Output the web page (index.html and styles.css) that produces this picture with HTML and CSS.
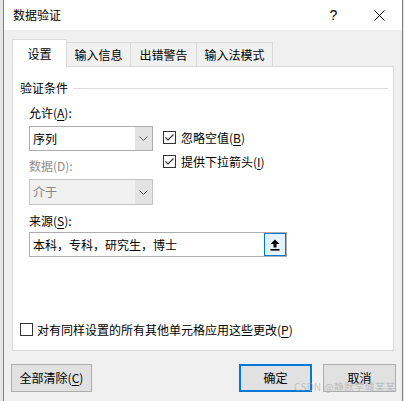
FILE: index.html
```html
<!DOCTYPE html>
<html lang="zh-CN">
<head>
<meta charset="utf-8">
<title>数据验证</title>
<link rel="stylesheet" href="styles.css">
</head>
<body>
<div class="dialog">
  <div class="titlebar">
    <span class="title">数据验证</span>
    <div class="tb-btns">
      <span class="tb-btn help">?</span>
      <span class="tb-btn close">
        <svg width="11" height="11" viewBox="0 0 11 11"><path d="M0.5 0.5 L10.5 10.5 M10.5 0.5 L0.5 10.5" stroke="#000" stroke-width="1" fill="none"/></svg>
      </span>
    </div>
  </div>
  <div class="content">
    <div class="tabs">
      <div class="tab active t1">设置</div>
      <div class="tab t2">输入信息</div>
      <div class="tab t3">出错警告</div>
      <div class="tab t4">输入法模式</div>
    </div>
    <div class="panel">
      <div class="group-title"><span>验证条件</span><span class="rule"></span></div>
      <div class="form">
        <div class="col-left">
          <div class="label">允许(<u>A</u>):</div>
          <div class="select s1">
            <span class="val">序列</span>
            <span class="drop"><svg width="9" height="5" viewBox="0 0 9 5"><polyline points="0.5,0.5 4.5,4.5 8.5,0.5" fill="none" stroke="#5a5a5a" stroke-width="1"/></svg></span>
          </div>
          <div class="label disabled l2">数据(D):</div>
          <div class="select s2 disabled">
            <span class="val">介于</span>
            <span class="drop"><svg width="9" height="5" viewBox="0 0 9 5"><polyline points="0.5,0.5 4.5,4.5 8.5,0.5" fill="none" stroke="#5a5a5a" stroke-width="1"/></svg></span>
          </div>
        </div>
        <div class="col-right">
          <div class="check">
            <span class="box"><svg width="11" height="11" viewBox="0 0 11 11"><polyline points="1.5,5.5 4,8 9.5,2.5" fill="none" stroke="#333" stroke-width="1.1"/></svg></span>
            <span>忽略空值(<u>B</u>)</span>
          </div>
          <div class="check c2">
            <span class="box"><svg width="11" height="11" viewBox="0 0 11 11"><polyline points="1.5,5.5 4,8 9.5,2.5" fill="none" stroke="#333" stroke-width="1.1"/></svg></span>
            <span>提供下拉箭头(<u>I</u>)</span>
          </div>
        </div>
      </div>
      <div class="source">
        <div class="label">来源(<u>S</u>):</div>
        <div class="input">
          <span class="val">本科，专科，研究生，博士</span>
          <span class="pick"><svg width="10" height="12" viewBox="0 0 10 12"><path d="M5 0.5 L9.5 5 L6.5 5 L6.5 8.5 L3.5 8.5 L3.5 5 L0.5 5 Z" fill="#000"/><rect x="0.5" y="10" width="9" height="1.6" fill="#000"/></svg></span>
        </div>
      </div>
      <div class="check apply">
        <span class="box"></span>
        <span>对有同样设置的所有其他单元格应用这些更改(<u>P</u>)</span>
      </div>
    </div>
    <div class="buttons">
      <button class="btn clear">全部清除(<u>C</u>)</button>
      <span class="spacer"></span>
      <button class="btn ok">确定</button>
      <button class="btn cancel">取消</button>
    </div>
  </div>
  <div class="watermark">CSDN @静默学城某某</div>
</div>
</body>
</html>
```
FILE: styles.css
```css
html, body {
  margin: 0;
  padding: 0;
}
body {
  width: 404px;
  height: 401px;
  overflow: hidden;
  background: #e6e6e6;
  font-family: "Noto Sans CJK SC", "Noto Sans", sans-serif;
  font-size: 12px;
  line-height: 16px;
  color: #000;
}
u {
  text-decoration: underline;
  text-underline-offset: 2px;
}
.dialog {
  position: relative;
  margin-left: 3px;
  width: 400px;
  height: 401px;
  box-sizing: border-box;
  border-left: 1px solid #7f7f7f;
  border-right: 1px solid #7f7f7f;
  background: #f0f0f0;
  display: flex;
  flex-direction: column;
}
.titlebar {
  height: 30px;
  background: #fff;
  display: flex;
  align-items: center;
  padding-left: 9px;
}
.title {
  flex: 1;
}
.tb-btns {
  display: flex;
  height: 30px;
}
.tb-btn {
  width: 45px;
  height: 30px;
  display: flex;
  align-items: center;
  justify-content: center;
}
.help {
  font-family: "Liberation Sans", sans-serif;
  font-size: 14px;
}
.close {
  padding-left: 1px;
}
.content {
  flex: 1;
  padding: 9px 7px 0 8px;
  display: flex;
  flex-direction: column;
}
.tabs {
  height: 27px;
  display: flex;
  align-items: flex-end;
}
.tab {
  box-sizing: border-box;
  height: 24px;
  border: 1px solid #d9d9d9;
  border-bottom: none;
  display: flex;
  align-items: center;
  justify-content: center;
  padding-top: 1px;
  margin-left: -1px;
  background: #f0f0f0;
}
.tab.t1 { width: 55px; margin-left: 0; }
.tab.t2 { width: 65px; }
.tab.t3 { width: 67px; }
.tab.t4 { width: 77px; }
.tab.active {
  height: 28px;
  margin-bottom: -1px;
  background: #fff;
  position: relative;
  z-index: 1;
  padding-top: 0;
}
.panel {
  box-sizing: border-box;
  width: 382px;
  height: 285px;
  border: 1px solid #d9d9d9;
  background: #fff;
  padding: 13px 0 14px 0;
  display: flex;
  flex-direction: column;
}
.group-title {
  height: 16px;
  display: flex;
  align-items: center;
  padding: 0 5px 0 7px;
}
.rule {
  flex: 1;
  height: 1px;
  background: #dcdcdc;
  margin-left: 5px;
}
.form {
  display: flex;
  padding-left: 16px;
  margin-top: 9px;
  gap: 10px;
}
.col-left {
  width: 124px;
}
.label {
  height: 16px;
}
.label.disabled {
  color: #8d8d8d;
}
.l2 {
  margin-top: 7px;
}
.select {
  box-sizing: border-box;
  height: 25px;
  margin-top: 5px;
  border: 1px solid #adadad;
  background: #fff;
  display: flex;
}
.select .val {
  flex: 1;
  padding-left: 3px;
  display: flex;
  align-items: center;
}
.select .drop {
  width: 17px;
  background: #e3e3e3;
  display: flex;
  align-items: center;
  justify-content: center;
}
.select.s2 {
  height: 26px;
}
.select.disabled {
  border-color: #c6c6c6;
  background: #f0f0f0;
  color: #838383;
}
.select.disabled .drop {
  background: #e3e3e3;
}
.col-right {
  padding-top: 26px;
}
.check {
  display: flex;
  align-items: center;
  height: 13px;
  gap: 5px;
}
.check.c2 {
  margin-top: 11px;
}
.box {
  box-sizing: border-box;
  width: 13px;
  height: 13px;
  border: 1px solid #333;
  background: #fff;
  display: flex;
  align-items: center;
  justify-content: center;
  flex: none;
}
.source {
  padding-left: 16px;
  margin-top: 8px;
}
.input {
  box-sizing: border-box;
  width: 258px;
  height: 25px;
  margin-top: 3px;
  border: 1px solid #adadad;
  background: #fff;
  display: flex;
}
.input .val {
  flex: 1;
  padding-left: 3px;
  display: flex;
  align-items: center;
}
.pick {
  box-sizing: border-box;
  width: 22px;
  height: 23px;
  border: 1px solid #0078d7;
  background: #e5f1fb;
  display: flex;
  align-items: center;
  justify-content: center;
}
.check.apply {
  margin-top: auto;
  padding-left: 7px;
  gap: 4px;
}
.buttons {
  margin-top: 13px;
  margin-left: -1px;
  margin-right: -1px;
  display: flex;
  gap: 11px;
}
.spacer {
  flex: 1;
}
.btn {
  box-sizing: border-box;
  height: 28px;
  border: 1px solid #adadad;
  background: #e1e1e1;
  font-family: inherit;
  font-size: 12px;
  line-height: 16px;
  color: #000;
  padding: 0;
}
.btn.clear {
  width: 81px;
}
.btn.ok {
  width: 73px;
  border: 2px solid #0078d7;
}
.btn.cancel {
  width: 73px;
}
.watermark {
  position: absolute;
  left: 290px;
  top: 380px;
  font-size: 10px;
  line-height: 14px;
  color: rgba(160, 160, 160, 0.55);
  white-space: nowrap;
  letter-spacing: 0.3px;
}
```
